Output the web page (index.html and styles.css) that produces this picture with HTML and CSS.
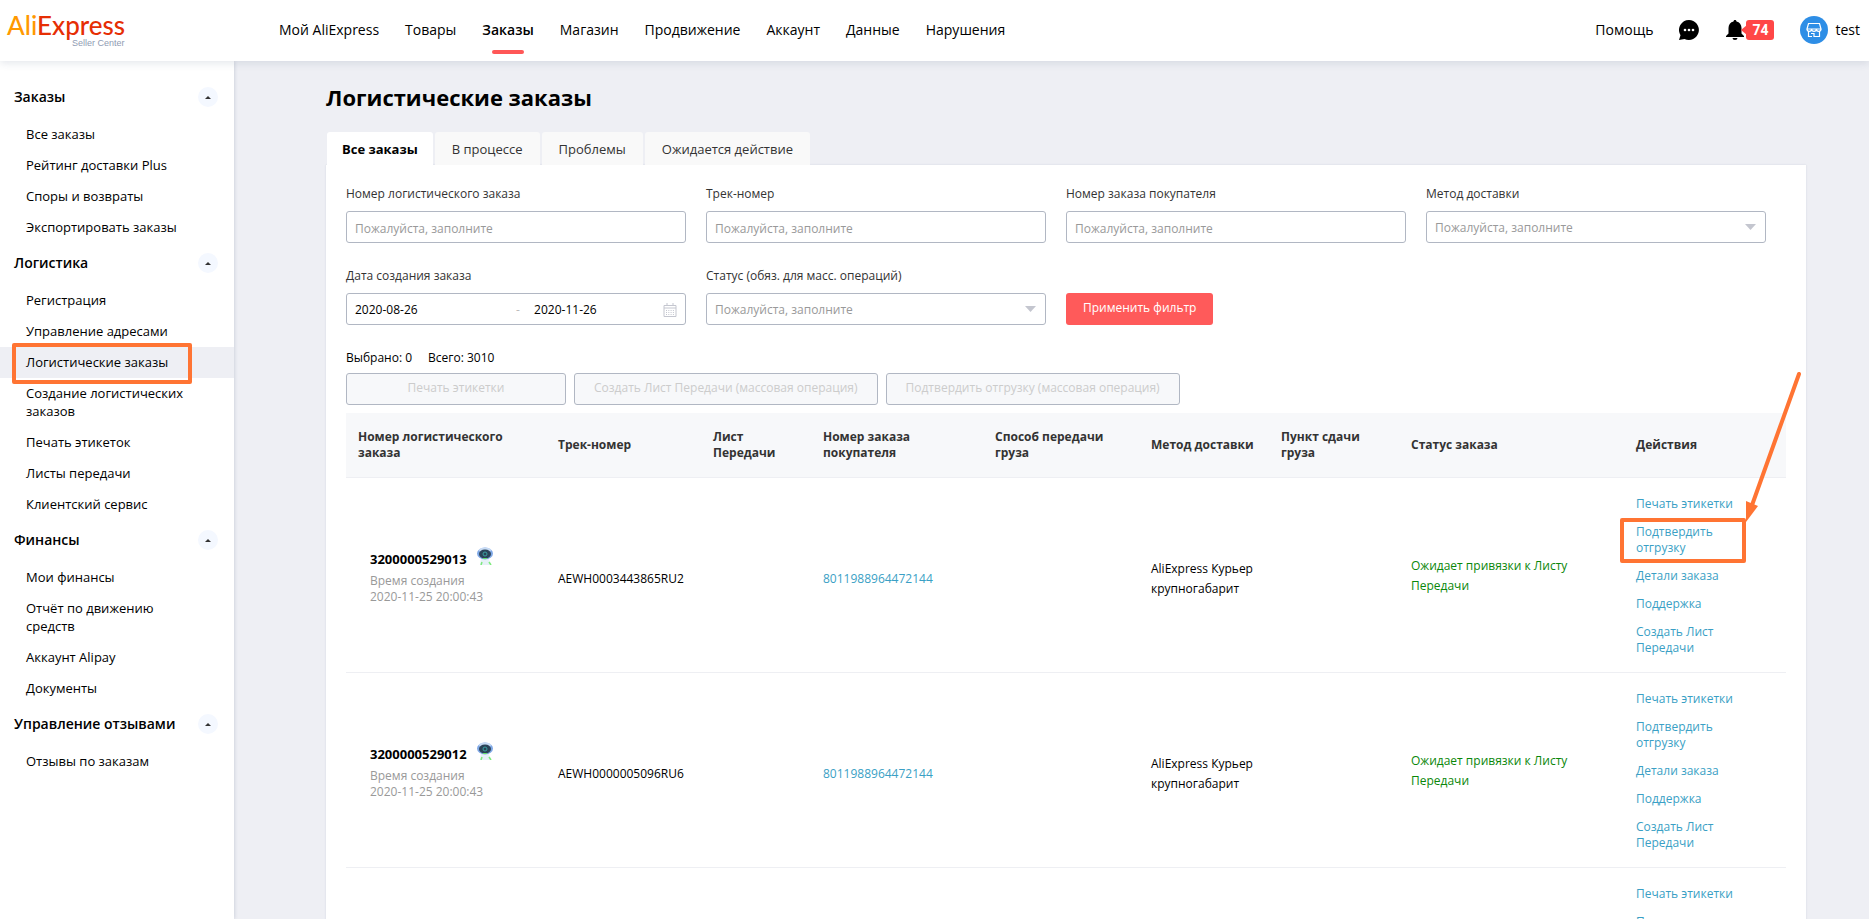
FILE: index.html
```
<!DOCTYPE html>
<html lang="ru">
<head>
<meta charset="utf-8">
<title>Логистические заказы</title>
<link rel="stylesheet" href="styles.css">
</head>
<body>
<svg class="defs" width="0" height="0" aria-hidden="true">
  <symbol id="robot" viewBox="0 0 18 18">
    <path d="M5 11h8l1 7H4z" fill="#e6f0f7"/>
    <path d="M6 15l-1 3M13 15l2 3" stroke="#7dea7d" stroke-width="1.5"/>
    <ellipse cx="9" cy="6.500" rx="8" ry="6" fill="#7fa8e6"/>
    <ellipse cx="9" cy="3" rx="6" ry="2.500" fill="#c9dcf5"/>
    <ellipse cx="9" cy="7" rx="6" ry="4.500" fill="#2b4358"/>
    <circle cx="9" cy="7" r="2" fill="none" stroke="#38a0a0"/>
    <path d="M7 11.500h4" stroke="#66e06a"/>
  </symbol>
</svg>
<header class="header">
  <a class="logo" href="#" aria-label="AliExpress Seller Center">
    <span class="logo-name"><span class="logo-ali">Ali</span>Express</span>
    <span class="logo-sub">Seller Center</span>
  </a>
  <nav class="nav">
    <a href="#">Мой AliExpress</a>
    <a href="#">Товары</a>
    <a class="current" href="#">Заказы</a>
    <a href="#">Магазин</a>
    <a href="#">Продвижение</a>
    <a href="#">Аккаунт</a>
    <a href="#">Данные</a>
    <a href="#">Нарушения</a>
  </nav>
  <div class="tools">
    <a class="help" href="#">Помощь</a>
    <button class="icon-button chat" aria-label="Сообщения">
      <svg width="20" height="20" viewBox="0 0 20 20"><path d="M10 0a10 10 0 1 1-4.500 19L0 20l1.500-4.800A10 10 0 0 1 10 0z"/><g fill="#fff"><circle cx="6" cy="10" r="1.300"/><circle cx="10" cy="10" r="1.300"/><circle cx="14" cy="10" r="1.300"/></g></svg>
    </button>
    <button class="icon-button bell" aria-label="Уведомления">
      <svg width="18" height="20" viewBox="0 0 18 20"><path d="M9 0c.9 0 1.500.6 1.500 1.600C13.600 2.300 15.500 5 15.500 8v5.500L18 16v1H0v-1l2.500-2.500V8c0-3 1.900-5.700 5-6.400C7.500.6 8.100 0 9 0zM6.500 18h5a2.500 2 0 0 1-5 0z"/></svg>
      <span class="badge">74</span>
    </button>
    <a class="account" href="#">
      <svg width="28" height="28" viewBox="0 0 28 28"><circle cx="14" cy="14" r="14" fill="#2e8ee6"/><g fill="none" stroke="#fff" stroke-width="1.200"><path d="M8.500 7.500h11l1.500 5.500H7zM7 13a2.300 2.300 0 0 0 4.600 0 2.300 2.300 0 0 0 4.800 0 2.300 2.300 0 0 0 4.600 0M8.500 15.500v5H12M19.500 15.500v5H14v-3h-3"/></g></svg>
      <span>test</span>
    </a>
  </div>
</header>
<div class="layout">
  <aside class="sidebar">
    <section class="group">
      <h2 class="group-title">Заказы <button class="toggle" aria-label="Свернуть"></button></h2>
      <ul>
        <li><a href="#">Все заказы</a></li>
        <li><a href="#">Рейтинг доставки Plus</a></li>
        <li><a href="#">Споры и возвраты</a></li>
        <li><a href="#">Экспортировать заказы</a></li>
      </ul>
    </section>
    <section class="group">
      <h2 class="group-title">Логистика <button class="toggle" aria-label="Свернуть"></button></h2>
      <ul>
        <li><a href="#">Регистрация</a></li>
        <li><a href="#">Управление адресами</a></li>
        <li class="active"><a href="#">Логистические заказы</a></li>
        <li><a href="#">Создание логистических заказов</a></li>
        <li><a href="#">Печать этикеток</a></li>
        <li><a href="#">Листы передачи</a></li>
        <li><a href="#">Клиентский сервис</a></li>
      </ul>
    </section>
    <section class="group">
      <h2 class="group-title">Финансы <button class="toggle" aria-label="Свернуть"></button></h2>
      <ul>
        <li><a href="#">Мои финансы</a></li>
        <li><a href="#">Отчёт по движению средств</a></li>
        <li><a href="#">Аккаунт Alipay</a></li>
        <li><a href="#">Документы</a></li>
      </ul>
    </section>
    <section class="group">
      <h2 class="group-title">Управление отзывами <button class="toggle" aria-label="Свернуть"></button></h2>
      <ul>
        <li><a href="#">Отзывы по заказам</a></li>
      </ul>
    </section>
  </aside>
  <main class="main">
    <h1>Логистические заказы</h1>
    <div class="tabs" role="tablist">
      <button class="tab selected" role="tab" aria-selected="true">Все заказы</button>
      <button class="tab" role="tab">В процессе</button>
      <button class="tab" role="tab">Проблемы</button>
      <button class="tab" role="tab">Ожидается действие</button>
    </div>
    <div class="panel">
      <form class="filters">
        <div class="field"><label for="lo">Номер логистического заказа</label><input class="control" id="lo" type="text" placeholder="Пожалуйста, заполните"></div>
        <div class="field"><label for="track">Трек-номер</label><input class="control" id="track" type="text" placeholder="Пожалуйста, заполните"></div>
        <div class="field"><label for="buyer">Номер заказа покупателя</label><input class="control" id="buyer" type="text" placeholder="Пожалуйста, заполните"></div>
        <div class="field"><label for="method">Метод доставки</label><select class="control" id="method"><option>Пожалуйста, заполните</option></select></div>
        <div class="field"><label for="from">Дата создания заказа</label>
          <div class="control range">
            <input class="range-from" id="from" type="text" value="2020-08-26"><span class="dash">-</span><input class="range-to" type="text" value="2020-11-26" aria-label="Дата окончания">
            <svg width="14" height="14" viewBox="0 0 14 14" fill="none" stroke="#c4c6cf"><path d="M1 2.500h12v11H1zM1 5h12M4 0v3M10 0v3"/><path d="M3 7.500h8M3 9.500h8M3 11.500h8" stroke-dasharray="1 1.300"/></svg>
          </div>
        </div>
        <div class="field"><label for="status">Статус (обяз. для масс. операций)</label><select class="control" id="status"><option>Пожалуйста, заполните</option></select></div>
        <div class="field submit"><button class="apply" type="button">Применить фильтр</button></div>
      </form>
      <p class="counts"><span>Выбрано: 0</span><span>Всего: 3010</span></p>
      <div class="bulk">
        <button class="bulk-print" disabled>Печать этикетки</button>
        <button disabled>Создать Лист Передачи (массовая операция)</button>
        <button disabled>Подтвердить отгрузку (массовая операция)</button>
      </div>
      <table class="orders">
        <colgroup><col class="c-order"><col class="c-track"><col class="c-sheet"><col class="c-buyer"><col class="c-way"><col class="c-method"><col class="c-point"><col class="c-status"><col class="c-actions"></colgroup>
        <thead><tr><th>Номер логистического заказа</th><th>Трек-номер</th><th>Лист Передачи</th><th>Номер заказа покупателя</th><th>Способ передачи груза</th><th>Метод доставки</th><th>Пункт сдачи груза</th><th>Статус заказа</th><th>Действия</th></tr></thead>
        <tbody>
          <tr>
            <td><div class="order"><div class="order-no"><b>3200000529013</b><svg class="robot" width="18" height="18"><use href="#robot"/></svg></div><div class="created">Время создания<br>2020-11-25 20:00:43</div></div></td>
            <td class="low">AEWH0003443865RU2</td><td></td>
            <td class="low"><a href="#">8011988964472144</a></td><td></td>
            <td class="low">AliExpress Курьер крупногабарит</td><td></td>
            <td class="status">Ожидает привязки к Листу Передачи</td>
            <td><ul class="actions"><li><a href="#">Печать этикетки</a></li><li class="marked"><a href="#">Подтвердить отгрузку</a><svg class="arrow" width="60" height="152" viewBox="0 0 60 152"><path d="M55 4L7 138" stroke="#ff7433" stroke-width="4" stroke-linecap="round"/><path d="M2 131l12 5L2 152z" fill="#ff7433"/></svg></li><li><a href="#">Детали заказа</a></li><li><a href="#">Поддержка</a></li><li><a href="#">Создать Лист Передачи</a></li></ul></td>
          </tr>
          <tr>
            <td><div class="order"><div class="order-no"><b>3200000529012</b><svg class="robot" width="18" height="18"><use href="#robot"/></svg></div><div class="created">Время создания<br>2020-11-25 20:00:43</div></div></td>
            <td class="low">AEWH0000005096RU6</td><td></td>
            <td class="low"><a href="#">8011988964472144</a></td><td></td>
            <td class="low">AliExpress Курьер крупногабарит</td><td></td>
            <td class="status">Ожидает привязки к Листу Передачи</td>
            <td><ul class="actions"><li><a href="#">Печать этикетки</a></li><li><a href="#">Подтвердить отгрузку</a></li><li><a href="#">Детали заказа</a></li><li><a href="#">Поддержка</a></li><li><a href="#">Создать Лист Передачи</a></li></ul></td>
          </tr>
          <tr>
            <td></td><td></td><td></td><td></td><td></td><td></td><td></td><td></td>
            <td><ul class="actions"><li><a href="#">Печать этикетки</a></li><li><a href="#">Подтвердить отгрузку</a></li></ul></td>
          </tr>
        </tbody>
      </table>
    </div>
  </main>
</div>
</body>
</html>
```
FILE: styles.css
```
*, *::before, *::after { box-sizing: border-box; }
body {
  margin: 0;
  height: 100vh;
  overflow: hidden;
  display: flex;
  flex-direction: column;
  background: #eeeff4;
  color: #000;
  font: 12px/16px "Open Sans", "Noto Sans", sans-serif;
}
a { color: inherit; text-decoration: none; }
ul { list-style: none; margin: 0; padding: 0; }
button, input, select { font: inherit; }
button { border: 0; background: none; padding: 0; cursor: pointer; }
.defs { position: absolute; }

.header {
  position: relative;
  z-index: 2;
  flex: none;
  display: flex;
  align-items: center;
  height: 61px;
  padding: 0 9px 2px 7px;
  background: #fff;
  box-shadow: 0 2px 8px rgba(60, 75, 110, .14);
  font-size: 14px;
  line-height: 20px;
}
.logo { width: 272px; display: flex; flex-direction: column; }
.logo-name { font: 500 26px/26px Lato, sans-serif; color: #e62e04; }
.logo-ali { color: #ff9900; }
.logo-sub { padding-left: 65px; font: 9px/10px "Liberation Sans", sans-serif; color: #8f9bb3; }
.nav { display: flex; gap: 26px; }
.nav .current { position: relative; font-weight: 600; }
.nav .current::after {
  content: "";
  position: absolute;
  left: 50%;
  bottom: -14px;
  width: 32px;
  height: 4px;
  margin-left: -16px;
  border-radius: 2px;
  background: #ff5757;
}
.tools { display: flex; align-items: center; margin-left: auto; }
.icon-button { display: flex; align-items: center; }
.chat { margin-left: 26px; }
.bell { margin-left: 27px; }
.badge {
  position: relative;
  margin-left: 2px;
  width: 28px;
  border-radius: 3px;
  background: #ff4747;
  color: #fff;
  font: bold 14px/20px Roboto, sans-serif;
}
.badge::before {
  content: "";
  position: absolute;
  left: -5px;
  top: 5px;
  border: solid transparent;
  border-width: 5px 6px 5px 0;
  border-right-color: #ff4747;
}
.account { display: flex; align-items: center; gap: 7px; margin-left: 26px; }

.layout { flex: 1; display: flex; min-height: 0; }
.sidebar {
  flex: none;
  width: 234px;
  padding-top: 25px;
  background: #fff;
  box-shadow: 0 0 4px rgba(60, 75, 110, .24);
  font-size: 13px;
  line-height: 18px;
}
.group-title {
  display: flex;
  align-items: center;
  justify-content: space-between;
  margin: 0;
  padding: 0 16px 11px 14px;
  font-size: 14px;
  line-height: 22px;
  font-weight: 600;
}
.group ul { padding-bottom: 9px; }
.group li { padding: 6px 40px 7px 26px; }
.group .active { position: relative; background: #eeeff4; }
.active::after {
  content: "";
  position: absolute;
  left: 12px;
  top: -4px;
  width: 180px;
  height: 41px;
  border: 4px solid #ff7433;
  border-radius: 2px;
  pointer-events: none;
}
.toggle {
  display: grid;
  place-items: center;
  width: 20px;
  height: 20px;
  border-radius: 50%;
  background: #f4f8ff;
}
.toggle::before {
  content: "";
  border: solid transparent;
  border-width: 0 3px 3px;
  border-bottom-color: #333;
}

.main { flex: 1; min-width: 0; padding: 20px 63px 0 92px; }
h1 { margin: 0; font-size: 22px; line-height: 32px; font-weight: 700; }
.tabs { display: flex; gap: 2px; margin-top: 19px; padding-left: 1px; }
.tab {
  height: 33px;
  padding: 0 17px;
  border-radius: 3px 3px 0 0;
  background: #f9f9f9;
  color: #333;
  font-size: 13px;
}
.tab.selected { padding: 0 15px; background: #fff; color: #000; font-weight: 700; }
.panel {
  min-height: 100vh;
  padding: 20px 20px 0;
  background: #fff;
  box-shadow: 0 0 2px rgba(60, 75, 110, .14);
}
.filters { display: grid; grid-template-columns: repeat(4, minmax(0, 1fr)); row-gap: 24px; }
.field { display: flex; flex-direction: column; gap: 8px; padding-right: 20px; color: #333; line-height: 18px; }
.submit { justify-content: flex-end; align-items: flex-start; }
.control {
  width: 100%;
  height: 32px;
  padding: 2px 8px 0;
  border: 1px solid #b1b7c3;
  border-radius: 3px;
  background: #fff;
  color: #000;
}
.control::placeholder { color: #999; }
select.control {
  appearance: none;
  color: #999;
  background: #fff url("data:image/svg+xml,%3Csvg xmlns='http://www.w3.org/2000/svg' width='11' height='6'%3E%3Cpath d='M0 0h11L5.500 6z' fill='%23c4c6cf'/%3E%3C/svg%3E") no-repeat right 9px center;
}
.range { display: flex; align-items: center; }
.range input { min-width: 0; padding: 0; border: 0; background: none; color: #000; }
.range .range-from { flex: 5 1 0; }
.range .range-to { flex: 4 1 0; }
.dash { width: 18px; color: #bbb; }
.apply {
  height: 32px;
  padding: 0 17px 2px;
  border-radius: 3px;
  background: #ff5a5a;
  color: #fff;
  font-weight: 500;
}
.counts { display: flex; gap: 16px; margin: 24px 0 7px; line-height: 17px; }
.bulk { display: flex; gap: 8px; }
.bulk button {
  height: 32px;
  padding: 0 19px 2px;
  border: 1px solid #b1b7c3;
  border-radius: 3px;
  background: #f7f8fa;
  color: #ccc;
}
.bulk .bulk-print { width: 220px; }

.orders { width: 100%; margin-top: 8px; border-collapse: collapse; table-layout: fixed; }
.c-order { width: 200px; }
.c-track { width: 155px; }
.c-sheet { width: 110px; }
.c-buyer { width: 172px; }
.c-way { width: 156px; }
.c-method { width: 130px; }
.c-point { width: 130px; }
.c-status { width: 225px; }
.orders th, .orders td { padding: 18px 12px 16px; border-bottom: 1px solid #eeeff3; text-align: left; vertical-align: middle; }
.orders th { height: 64px; padding: 1px 12px 0; background: #f7f8fa; color: #333; font-weight: 700; }
.orders td a { color: #3a9fc5; }
.orders .low { padding-top: 24px; line-height: 20px; }
.orders .status { padding-right: 40px; color: #0a870a; line-height: 20px; }
.order { padding-left: 12px; }
.order-no { display: flex; height: 26px; padding-bottom: 2px; align-items: center; gap: 9px; font-size: 13px; }
.robot { align-self: flex-start; }
.created { color: #999; }
.actions { display: grid; gap: 12px; padding-right: 40px; }
.marked { position: relative; }
.marked::before {
  content: "";
  position: absolute;
  left: -16px;
  top: -6px;
  width: 126px;
  height: 45px;
  border: 4px solid #ff7433;
  border-radius: 2px;
  pointer-events: none;
}
.arrow { position: absolute; left: 108px; bottom: 34px; fill: none; }
```
